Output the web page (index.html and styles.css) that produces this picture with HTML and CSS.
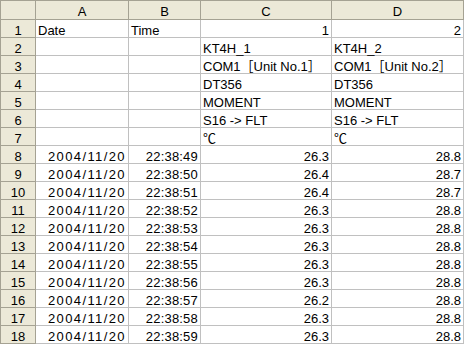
FILE: index.html
```html
<!DOCTYPE html>
<html>
<head>
<meta charset="utf-8">
<link rel="stylesheet" href="styles.css">
</head>
<body>
<div class="sheet">
  <div class="hd corner"></div><div class="hd">A</div><div class="hd">B</div><div class="hd">C</div><div class="hd">D</div>

  <div class="rh">1</div><div class="c">Date</div><div class="c">Time</div><div class="c r">1</div><div class="c r">2</div>
  <div class="rh">2</div><div class="c"></div><div class="c"></div><div class="c">KT4H_1</div><div class="c">KT4H_2</div>
  <div class="rh">3</div><div class="c"></div><div class="c"></div><div class="c">COM1［Unit No.1］</div><div class="c">COM1［Unit No.2］</div>
  <div class="rh">4</div><div class="c"></div><div class="c"></div><div class="c">DT356</div><div class="c">DT356</div>
  <div class="rh">5</div><div class="c"></div><div class="c"></div><div class="c">MOMENT</div><div class="c">MOMENT</div>
  <div class="rh">6</div><div class="c"></div><div class="c"></div><div class="c">S16 -&gt; FLT</div><div class="c">S16 -&gt; FLT</div>
  <div class="rh">7</div><div class="c"></div><div class="c"></div><div class="c">℃</div><div class="c">℃</div>

  <div class="rh">8</div><div class="c r date">2004/11/20</div><div class="c r time">22:38:49</div><div class="c r">26.3</div><div class="c r">28.8</div>
  <div class="rh">9</div><div class="c r date">2004/11/20</div><div class="c r time">22:38:50</div><div class="c r">26.4</div><div class="c r">28.7</div>
  <div class="rh">10</div><div class="c r date">2004/11/20</div><div class="c r time">22:38:51</div><div class="c r">26.4</div><div class="c r">28.7</div>
  <div class="rh">11</div><div class="c r date">2004/11/20</div><div class="c r time">22:38:52</div><div class="c r">26.3</div><div class="c r">28.8</div>
  <div class="rh">12</div><div class="c r date">2004/11/20</div><div class="c r time">22:38:53</div><div class="c r">26.3</div><div class="c r">28.8</div>
  <div class="rh">13</div><div class="c r date">2004/11/20</div><div class="c r time">22:38:54</div><div class="c r">26.3</div><div class="c r">28.8</div>
  <div class="rh">14</div><div class="c r date">2004/11/20</div><div class="c r time">22:38:55</div><div class="c r">26.3</div><div class="c r">28.8</div>
  <div class="rh">15</div><div class="c r date">2004/11/20</div><div class="c r time">22:38:56</div><div class="c r">26.3</div><div class="c r">28.8</div>
  <div class="rh">16</div><div class="c r date">2004/11/20</div><div class="c r time">22:38:57</div><div class="c r">26.2</div><div class="c r">28.8</div>
  <div class="rh">17</div><div class="c r date">2004/11/20</div><div class="c r time">22:38:58</div><div class="c r">26.3</div><div class="c r">28.8</div>
  <div class="rh">18</div><div class="c r date">2004/11/20</div><div class="c r time">22:38:59</div><div class="c r">26.3</div><div class="c r">28.8</div>
</div>
</body>
</html>
```

FILE: styles.css
```css
html, body {
  margin: 0;
  padding: 0;
  background: #ffffff;
  overflow: hidden;
}

.sheet {
  display: grid;
  grid-template-columns: 35px 93px 72px 131px 132px;
  grid-template-rows: 19px repeat(18, 18px);
  width: 463px;
  border-left: 1px solid #A5A293;
  border-top: 1px solid #A5A293;
  font-family: "Liberation Sans", "Noto Sans CJK JP", sans-serif;
  font-size: 13px;
  color: #000000;
}

.sheet > div {
  box-sizing: border-box;
  padding: 4px 2px 0 2px;
  line-height: 13px;
  white-space: nowrap;
}

.hd, .rh {
  background: #ECE9D8;
  border-right: 1px solid #A5A293;
  border-bottom: 1px solid #A5A293;
  text-align: center;
}

.hd {
  padding-top: 3px;
}

.c {
  background: #ffffff;
  border-right: 1px solid #C0C0C0;
  border-bottom: 1px solid #C0C0C0;
  text-align: left;
}

.r {
  text-align: right;
}

.date {
  letter-spacing: 1.4px;
  padding-right: 1px;
}

.time {
  letter-spacing: 0.2px;
  padding-right: 3px;
}
```
